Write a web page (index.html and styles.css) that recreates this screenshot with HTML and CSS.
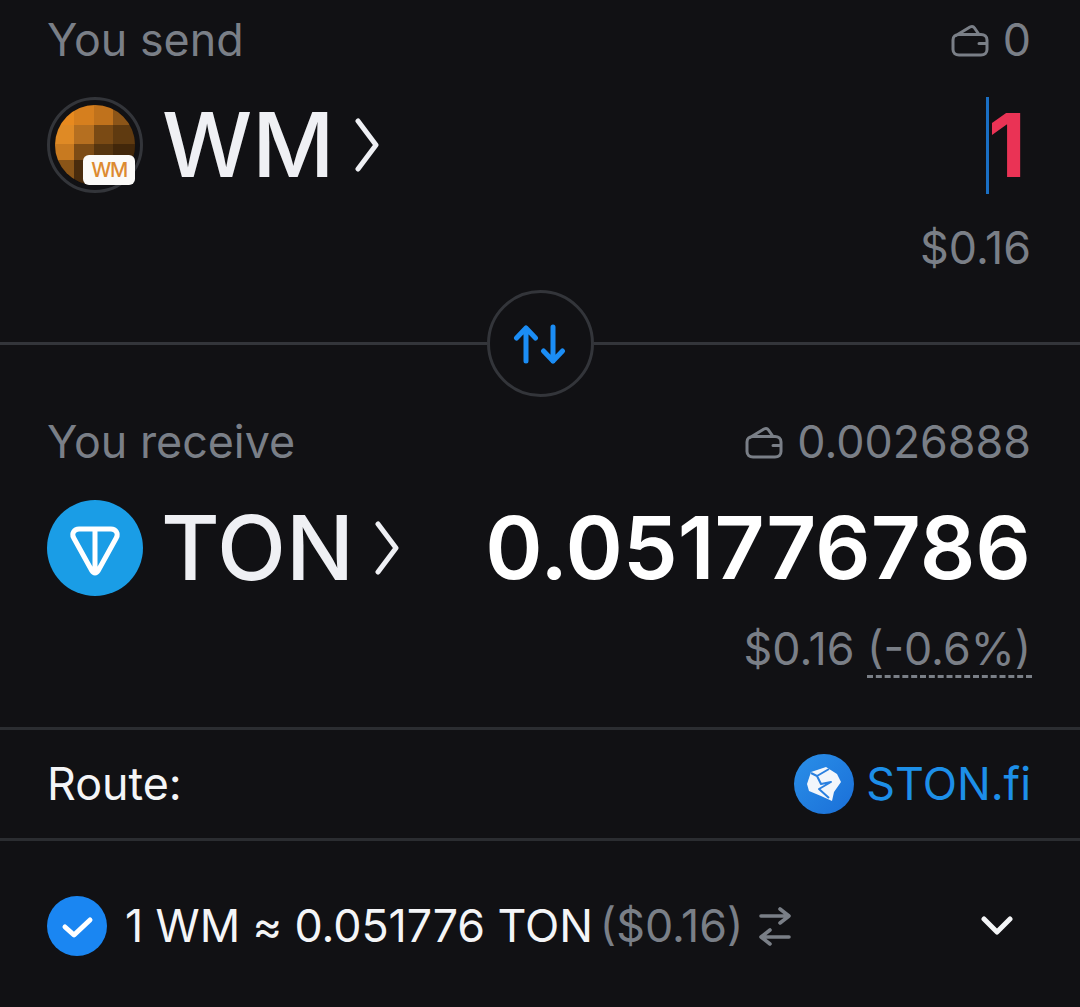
FILE: index.html
```html
<!DOCTYPE html>
<html lang="en">
<head>
<meta charset="utf-8">
<title>Swap</title>
<link rel="stylesheet" href="styles.css">
</head>
<body>
<main class="swap">
  <section class="side side-send">
    <div class="row row-meta">
      <span class="label">You send</span>
      <span class="balance">
        <svg class="wallet" viewBox="0 0 38 33" fill="none"><path d="M8 10.500H30c3.500 0 6 2 6 5.500v9.500c0 3.500-2.500 5.500-6 5.500H8c-3.500 0-6-2-6-5.500V16c0-3.500 2.500-5.500 6-5.500ZM5 11.500 19 3c2-1 3.500-.5 4.500 1L28 10.500M36 19.500H28" stroke="#7a7f87" stroke-width="3" stroke-linejoin="round" stroke-linecap="round"/></svg>
        <span>0</span>
      </span>
    </div>
    <div class="row row-token">
      <div class="token">
        <div class="avatar">
          <svg class="avatar-art" viewBox="0 0 80 80">
            <defs><clipPath id="disc"><circle cx="40" cy="40" r="40"/></clipPath></defs>
            <g clip-path="url(#disc)">
              <rect width="80" height="80" fill="#3a2208"/>
              <rect x="0" y="0" width="19" height="20" fill="#e88a1f"/>
              <rect x="19" y="0" width="20" height="20" fill="#d67f1e"/>
              <rect x="39" y="0" width="19" height="20" fill="#c0721c"/>
              <rect x="58" y="0" width="22" height="20" fill="#8c5518"/>
              <rect x="0" y="20" width="19" height="19" fill="#df8a25"/>
              <rect x="19" y="20" width="20" height="19" fill="#b56f20"/>
              <rect x="39" y="20" width="19" height="19" fill="#7a4a14"/>
              <rect x="58" y="20" width="22" height="19" fill="#5f3a10"/>
              <rect x="0" y="39" width="19" height="16" fill="#c87a20"/>
              <rect x="19" y="39" width="20" height="16" fill="#7d4c15"/>
              <rect x="39" y="39" width="19" height="16" fill="#56350f"/>
              <rect x="58" y="39" width="22" height="16" fill="#42270a"/>
              <rect x="0" y="55" width="19" height="25" fill="#8a5518"/>
              <rect x="19" y="55" width="20" height="25" fill="#4a2c0d"/>
            </g>
          </svg>
          <span class="avatar-badge">WM</span>
        </div>
        <span class="symbol">WM</span>
        <svg class="chev" viewBox="0 0 24 54" fill="none"><path d="M3 3 21 27 3 51" stroke="#eff0f4" stroke-width="5" stroke-linecap="round" stroke-linejoin="round"/></svg>
      </div>
      <div class="input">
        <span class="caret"></span><span class="amount-error">1</span>
      </div>
    </div>
    <div class="row row-usd"><span class="usd">$0.16</span></div>
  </section>

  <div class="switch">
    <span class="rule"></span>
    <div class="switch-btn">
      <svg viewBox="0 0 54 40" fill="none"><path d="M13 37V4M3.500 14 13 4 22.500 14M40 3V37M30.500 27 40 37 49.500 27" stroke="#1b8df5" stroke-width="5" stroke-linecap="round" stroke-linejoin="round"/></svg>
    </div>
    <span class="rule"></span>
  </div>

  <section class="side side-receive">
    <div class="row row-meta">
      <span class="label">You receive</span>
      <span class="balance">
        <svg class="wallet" viewBox="0 0 38 33" fill="none"><path d="M8 10.500H30c3.500 0 6 2 6 5.500v9.500c0 3.500-2.500 5.500-6 5.500H8c-3.500 0-6-2-6-5.500V16c0-3.500 2.500-5.500 6-5.500ZM5 11.500 19 3c2-1 3.500-.5 4.500 1L28 10.500M36 19.500H28" stroke="#7a7f87" stroke-width="3" stroke-linejoin="round" stroke-linecap="round"/></svg>
        <span>0.0026888</span>
      </span>
    </div>
    <div class="row row-token">
      <div class="token">
        <svg class="ton" viewBox="0 0 96 96">
          <circle cx="48" cy="48" r="48" fill="#1a9de6"/>
          <path d="M32 29H64c5 0 7.500 4.500 5.500 8.500L51 71c-1.500 2.500-4.500 2.500-6 0L26.500 37.500C24.500 33.500 27 29 32 29ZM48 29V72" fill="none" stroke="#fff" stroke-width="5" stroke-linejoin="round"/>
        </svg>
        <span class="symbol">TON</span>
        <svg class="chev" viewBox="0 0 24 54" fill="none"><path d="M3 3 21 27 3 51" stroke="#eff0f4" stroke-width="5" stroke-linecap="round" stroke-linejoin="round"/></svg>
      </div>
      <span class="amount">0.051776786</span>
    </div>
    <div class="row row-usd">
      <span class="usd">$0.16 <span class="impact">(-0.6%)</span></span>
    </div>
  </section>

  <div class="info info-route">
    <span class="info-label">Route:</span>
    <span class="dex">
      <svg class="dex-logo" viewBox="0 0 60 60">
        <defs><linearGradient id="dexg" x1="0" y1="0" x2="1" y2="1"><stop offset="0" stop-color="#2a8fe8"/><stop offset="1" stop-color="#1a6fd8"/></linearGradient></defs>
        <circle cx="30" cy="30" r="30" fill="url(#dexg)"/>
        <path d="M13 30 17 18 32 13 43 20 47 28 40 38 38 47 27 42 15 37Z" fill="#f2f6fb"/>
        <path d="M35 15 23 22 27 30 37 28 25 35 35 44M17 19 23 22" fill="none" stroke="#2a80e0" stroke-width="2" stroke-linejoin="round"/>
      </svg>
      <span>STON.fi</span>
    </span>
  </div>

  <div class="info info-rate">
    <div class="rate">
      <svg class="check" viewBox="0 0 60 60">
        <circle cx="30" cy="30" r="30" fill="#1a86f2"/>
        <path d="M18 31 27 39 43 24" fill="none" stroke="#fff" stroke-width="5" stroke-linecap="round" stroke-linejoin="round"/>
      </svg>
      <span class="rate-text">1 WM ≈ 0.051776 TON</span>
      <span class="rate-usd">($0.16)</span>
      <svg class="flip" viewBox="0 0 32 39" fill="none"><path d="M2 9H30M21 2 30 9 21 16M30 30H2M11 23 2 30 11 37" stroke="#7a7f87" stroke-width="3.600" stroke-linecap="round" stroke-linejoin="round"/></svg>
    </div>
    <svg class="expand" viewBox="0 0 32 20" fill="none"><path d="M3 3 16 16 29 3" stroke="#f4f5f7" stroke-width="5" stroke-linecap="round" stroke-linejoin="round"/></svg>
  </div>
</main>
</body>
</html>
```
FILE: styles.css
```css
* { box-sizing: border-box; }
html, body { margin: 0; padding: 0; }
body {
  width: 1080px;
  height: 1007px;
  overflow: hidden;
  background: #111114;
  font-family: Inter, "Liberation Sans", sans-serif;
  color: #eff0f4;
}
.swap { display: flex; flex-direction: column; }
.side { padding: 0 49px 0 47px; }
.row { display: flex; align-items: center; justify-content: space-between; }
.row-meta { height: 50px; font-size: 44.800px; line-height: 50px; color: #7a7f87; }
.side-send { padding-top: 15px; }
.side-receive { padding-top: 20px; }
.balance { display: flex; align-items: center; gap: 14px; }
.wallet { width: 38px; height: 33px; }
.row-token { height: 96px; margin-top: 32px; }
.side-receive .row-token { margin-top: 33px; }
.token { display: flex; align-items: center; }
.avatar { position: relative; width: 96px; height: 96px; margin-right: 1px; border: 3px solid #33353a; border-radius: 50%; padding: 5px; }
.avatar-art { display: block; width: 80px; height: 80px; }
.avatar-badge {
  position: absolute;
  right: 5px;
  bottom: 5px;
  width: 52px;
  height: 30px;
  background: #fbfaf8;
  border-radius: 6px;
  color: #dd8a30;
  font-size: 20px;
  line-height: 30px;
  text-align: center;
  font-weight: 500;
  letter-spacing: -1.500px;
}
.ton { display: block; width: 96px; height: 96px; flex: none; }
.symbol { font-size: 90px; line-height: 96px; margin-left: 18px; font-weight: 500; }
.chev { width: 24px; height: 54px; margin-left: 21px; flex: none; }
.input { display: flex; align-items: center; margin-right: 5px; }
.caret { width: 3px; height: 97px; background: #1a6fc4; }
.amount-error { font-size: 88px; line-height: 96px; font-weight: 700; color: #ea3355; margin-left: -1px; }
.amount { font-size: 87px; line-height: 96px; font-weight: 600; color: #fff; }
.row-usd { justify-content: flex-end; height: 50px; margin-top: 30px; font-size: 44.800px; line-height: 50px; color: #7a7f87; }
.impact { border-bottom: 3px dashed #7a7f87; display: inline-block; line-height: 50px; height: 54px; margin-right: -1px; padding-right: 1px; }
.switch { display: flex; align-items: center; height: 107px; margin-top: 17px; }
.rule { flex: 1; height: 3px; background: #33353a; }
.switch-btn { width: 107px; height: 107px; border: 3px solid #33353a; border-radius: 50%; display: flex; align-items: center; justify-content: center; }
.switch-btn svg { width: 54px; height: 40px; }
.info { display: flex; align-items: center; justify-content: space-between; padding: 0 49px 0 47px; font-size: 44.800px; }
.info-route { height: 114px; margin-top: 51px; border-top: 3px solid #2b2d31; border-bottom: 3px solid #2b2d31; }
.info-label { color: #f4f5f7; }
.dex { display: flex; align-items: center; gap: 12px; color: #1d8fe8; }
.dex-logo { width: 60px; height: 60px; }
.info-rate { height: 60px; margin-top: 55px; }
.rate { display: flex; align-items: center; }
.check { width: 60px; height: 60px; }
.rate-text { margin-left: 18px; color: #f4f5f7; letter-spacing: -0.100px; }
.rate-usd { margin-left: 7px; color: #7a7f87; }
.flip { width: 32px; height: 39px; margin-left: 16px; }
.expand { width: 32px; height: 20px; margin-right: 18px; }
```
